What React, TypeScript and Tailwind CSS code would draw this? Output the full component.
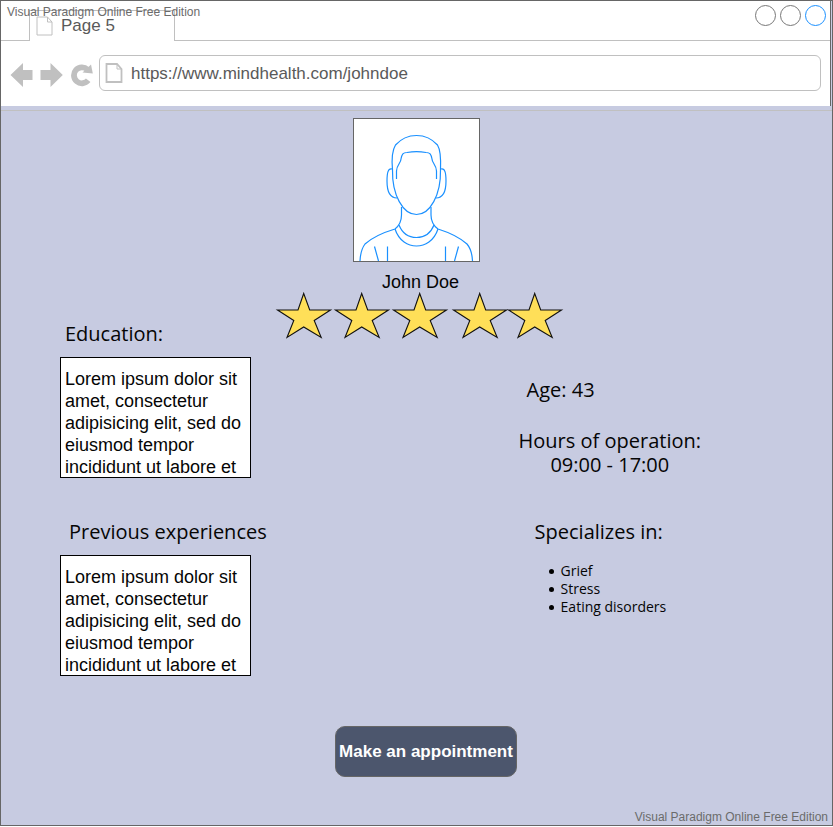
const LOREM = ["Lorem ipsum dolor sit", "amet, consectetur", "adipisicing elit, sed do", "eiusmod tempor", "incididunt ut labore et"];
const SPECIALTIES = ["Grief", "Stress", "Eating disorders"];
const STAR_OFFSETS = [0, 58, 116, 176, 231];

function PageIcon({ className, thick }: { className: string; thick?: boolean }) {
  return (
    <svg viewBox="0 0 17 20" className={className} fill="none" stroke="#c0c0c0" strokeWidth={thick ? 1.8 : 1} aria-hidden="true">
      <path d="M1 1H11.5L16 6V19H1Z" />
      <path d="M11.5 1V6H16" strokeWidth="1" />
    </svg>
  );
}

function BrowserHeader() {
  return (
    <header className="mr-px border-r border-[#666666] bg-white text-[#5a5a5a]">
      <div className="flex h-10 items-end">
        <div className="h-full w-7 border-b border-[#c0c0c0]" />
        <div className="flex h-[31px] w-[146px] items-center gap-2 border-x border-t border-[#c0c0c0] pl-[6px]">
          <PageIcon className="h-5 w-[17px]" />
          <span className="text-[17px] leading-5">Page 5</span>
        </div>
        <div className="flex h-full flex-1 items-start justify-end gap-1 border-b border-[#c0c0c0] pr-1 pt-1">
          <button type="button" aria-label="Minimize" className="size-[21px] rounded-full border border-[#777777]" />
          <button type="button" aria-label="Maximize" className="size-[21px] rounded-full border border-[#777777]" />
          <button type="button" aria-label="Close" className="size-[21px] rounded-full border border-[#1a90ff]" />
        </div>
      </div>
      <div className="flex h-[65px] items-center pb-[2px] pl-[9px] pr-[9px]">
        <button type="button" aria-label="Back" className="mr-[7px] mt-1">
          <svg viewBox="0 0 23 24" className="h-6 w-[23px]" fill="#c0c0c0"><path d="M0.500 12L13 0V7H22.500V17H13V24Z" /></svg>
        </button>
        <button type="button" aria-label="Forward" className="mr-2 mt-1">
          <svg viewBox="0 0 23 24" className="h-6 w-[23px]" fill="#c0c0c0"><path d="M22.800 12L10.500 0V7H0.500V17H10.500V24Z" /></svg>
        </button>
        <button type="button" aria-label="Reload" className="mr-[6px] mt-1">
          <svg viewBox="0 0 22 24" className="h-6 w-[22px]" fill="none">
            <path d="M16.500 6.500A8 8 0 1 0 17.200 17.300" stroke="#c0c0c0" strokeWidth="5.800" />
            <path d="M20 1.500L21.800 10.500L11.500 9.500Z" fill="#c0c0c0" />
          </svg>
        </button>
        <label className="flex h-9 flex-1 items-center gap-2 rounded-[6px] border border-[#c0c0c0] pl-[5px]">
          <PageIcon thick className="h-5 w-[18px]" />
          <input type="text" aria-label="Address" defaultValue="https://www.mindhealth.com/johndoe" className="min-w-0 flex-1 bg-transparent pt-[2px] text-[17px] leading-5 outline-none" />
        </label>
      </div>
    </header>
  );
}

function Portrait() {
  return (
    <svg viewBox="0 0 125 142" role="img" aria-label="Portrait of John Doe" className="mr-[7px] box-content h-[142px] w-[125px] border border-[#666666] bg-white" fill="none" stroke="#1a90ff" strokeWidth="1.200">
      <path d="M38.500 51C37.500 40 39 30 41.500 26Q50 16.500 62.500 16.500Q75 16.500 83.500 26C86 30 87 40 86.500 51" />
      <path d="M38.500 51C38 76 49 95.500 62.500 95.500C76 95.500 87 76 86.500 51" />
      <path d="M42.500 60V52C42.500 46 47 44 47 40C48 35 49 33.500 53 33.500C58 32.500 67 32.500 72 33.500C76 33.500 77 35 78 40C78 44 82.500 46 82.500 52V60" />
      <path d="M38 50C34 49 33 54 33 62C33 70 35 79 43 79M87 50C91 49 92 54 92 62C92 70 90 79 82 79" />
      <path d="M47.500 88V96C47.500 101 46 106 41 110Q21 116 11 125Q6.500 131 6 142M77 88V96C77 101 78.500 106 84 110Q103 116 113 125Q118 131 118.500 142" />
      <path d="M45 106C49 116 55 118.500 62.500 118.500C70 118.500 76 116 80 106" />
      <path d="M41 110C45 122 54 127 62.500 127C71 127 80 122 84 110" />
      <path d="M33.500 142V127.500M91.500 142V127.500M24.500 142L20.500 127.500M100.500 142L104.500 127.500" />
    </svg>
  );
}

function Rating() {
  return (
    <svg viewBox="0 1 286 46" role="img" aria-label="5 out of 5 stars" className="h-[46px] w-[286px] overflow-visible">
      {STAR_OFFSETS.map((x) => (
        <polygon key={x} transform={`translate(${x} 0)`} points="26.700,0.500 32.700,17 53.500,17 37.200,27.500 44.200,44.500 26.700,34 10,44.500 16.800,27.500 0.500,17 21,17" fill="#ffdf58" stroke="#111111" strokeWidth="1.100" />
      ))}
    </svg>
  );
}

function TextCard({ title, indent }: { title: string; indent: string }) {
  return (
    <section>
      <h2 className={`${indent} text-[20px] leading-6`}>{title}</h2>
      <p className="mt-[11px] h-[121px] w-[191px] overflow-hidden whitespace-nowrap border border-black bg-white pl-1 pt-[10px] font-['Liberation_Sans',Arial,sans-serif] text-[18px] leading-[22px]">
        {LOREM.map((line) => (
          <span key={line} className="block">{line}</span>
        ))}
      </p>
    </section>
  );
}

export default function App() {
  return (
    <div className="relative flex min-h-screen flex-col bg-white pb-px font-['Liberation_Sans',Arial,sans-serif] text-[#050505]">
      <div className="flex flex-1 flex-col border border-[#666666] bg-[#c7cbe1]">
        <BrowserHeader />
        <main className="mt-1 flex flex-1 flex-col border-t border-[#c0c0c0] pt-[7px]">
          <div className="flex flex-col items-center pl-[6px]">
            <Portrait />
            <h1 className="mt-2 pl-[2px] text-[18px] leading-6">John Doe</h1>
            <Rating />
          </div>
          <div className="-mt-[18px] flex justify-between pl-[59px] pr-[131px] font-['Open_Sans',sans-serif]">
            <div className="flex flex-col gap-[42px]">
              <TextCard title="Education:" indent="pl-[5px]" />
              <TextCard title="Previous experiences" indent="pl-[9px]" />
            </div>
            <div className="pt-14 text-[20px] leading-6">
              <p className="pl-2">Age: 43</p>
              <div className="mt-[27px] text-center">
                <p>Hours of operation:</p>
                <p>09:00 - 17:00</p>
              </div>
              <h2 className="mt-[43px] pl-4">Specializes in:</h2>
              <ul className="mt-[18px] pl-[30px] text-[14px] leading-[18px]">
                {SPECIALTIES.map((item) => (
                  <li key={item} className="flex items-center gap-[7px] before:size-[5px] before:rounded-full before:bg-black before:content-['']">{item}</li>
                ))}
              </ul>
            </div>
          </div>
          <div className="mt-[50px] flex justify-center pl-[19px]">
            <button type="button" className="h-[51px] w-[182px] whitespace-nowrap rounded-[10px] border border-[#666666] bg-[#4c566d] text-[17px] font-bold text-white">Make an appointment</button>
          </div>
          <footer className="mt-auto pr-1 text-right text-[12px] leading-4 text-[#6b6b6b]">Visual Paradigm Online Free Edition</footer>
        </main>
      </div>
      <span className="absolute left-[7px] top-1 text-[12px] leading-4 text-[#6b6b6b]">Visual Paradigm Online Free Edition</span>
    </div>
  );
}
